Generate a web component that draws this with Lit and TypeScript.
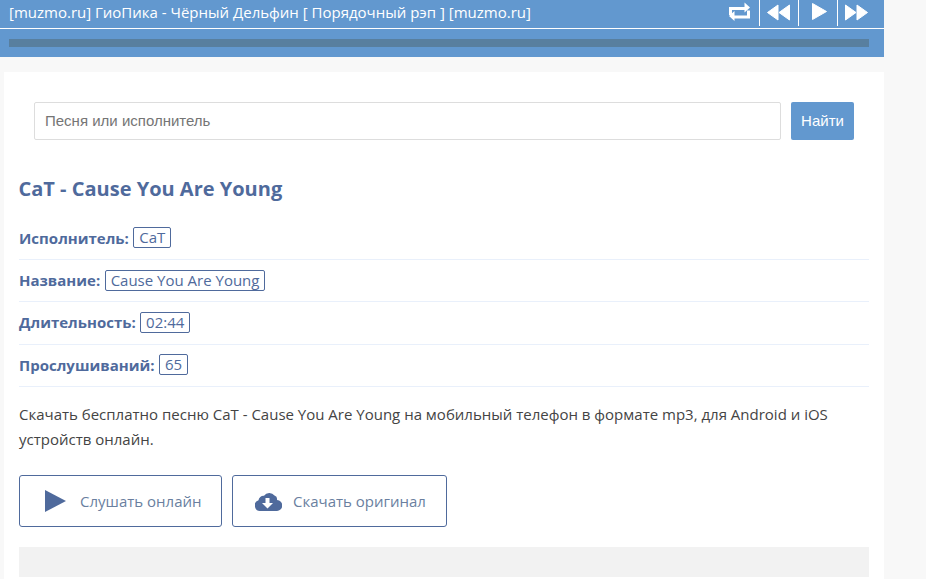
import { LitElement, html, css } from "lit";
import { customElement } from "lit/decorators.js";

const rows = [
  ["Исполнитель:", "CaT"],
  ["Название:", "Cause You Are Young"],
  ["Длительность:", "02:44"],
  ["Прослушиваний:", "65"],
];

@customElement("app-root")
export class AppRoot extends LitElement {
  static styles = css`
    :host { display: block; height: 579px; overflow: hidden; background: #f8f8f8; font-family: "Open Sans", "Noto Sans", sans-serif; color: #333; }
    .player { width: 884px; background: #6298cf; }
    .top { height: 28px; display: flex; align-items: flex-start; justify-content: space-between; border-bottom: 1px solid #fff; box-sizing: content-box; }
    .song { font-size: 15px; line-height: 24px; color: #fff; padding-left: 9px; white-space: nowrap; }
    .ctrls { display: flex; padding-right: 8px; height: 26px; }
    .ctrl { width: 38px; padding-bottom: 2px; box-sizing: content-box; height: 24px; display: flex; align-items: center; justify-content: center; border-left: 1px solid #fff; }
    .ctrl:first-child { border-left: none; }
    .ctrl svg { display: block; fill: #fff; }
    .round { stroke: #fff; stroke-width: 1; stroke-linejoin: round; }
    .bar-wrap { height: 28px; padding: 10px 15px 0 9px; box-sizing: border-box; }
    .bar { height: 8px; background: #587f9f; }
    .card { width: 880px; margin: 15px 0 0 4px; background: #fff; padding: 30px 15px 0; box-sizing: border-box; height: 520px; }
    .search { display: flex; gap: 10px; padding: 0 15px; }
    .input { flex: 1; height: 38px; box-sizing: border-box; border: 1px solid #ddd; border-radius: 2px; padding: 0 10px; font: 15px/36px "Liberation Sans", Arial, sans-serif; color: #757575; }
    .go { width: 63px; height: 38px; background: #6298cf; border-radius: 2px; color: #fff; font: 15px/38px "Liberation Sans", Arial, sans-serif; text-align: center; }
    h1 { margin: 37px 0 0 -0.5px; font-size: 20px; line-height: 24px; font-weight: 700; color: #4f6a9c; }
    .rows { margin-top: 16.4px; }
    .row { height: 42.4px; box-sizing: border-box; padding-bottom: 0.8px; border-bottom: 1px solid #e9f0fb; display: flex; align-items: center; gap: 4.4px; font-size: 15px; color: #4f6a9c; }
    .row b { font-weight: 700; }
    .tag { border: 1px solid #4f6a9c; border-radius: 2px; padding: 0 5px; line-height: 19px; }
    p { margin: 15px 0 0; font-size: 15px; line-height: 25px; color: #444; }
    .btns { display: flex; gap: 10px; margin-top: 23px; }
    .btn { height: 52px; box-sizing: border-box; border: 1px solid #4f6a9c; border-radius: 3px; display: flex; align-items: center; font-size: 15px; color: #6a7f9f; }
    .b1 { width: 203px; padding-left: 25px; gap: 14px; }
    .b2 { width: 215px; padding-left: 22px; gap: 11px; }
    .btn svg { display: block; fill: #4f6a9c; }
    .gray { margin-top: 20px; height: 30px; background: #f2f2f2; }
  `;

  render() {
    return html`
      <div class="player">
        <div class="top">
          <div class="song">[muzmo.ru] ГиоПика - Чёрный Дельфин [ Порядочный рэп ] [muzmo.ru]</div>
          <div class="ctrls">
            <div class="ctrl"><svg width="22" height="20" viewBox="0 0 22 20"><path d="M0 5h15.500V.5l5.500 5-5.500 5V8H3v5H0z"/><path d="M21 8.500v8H5.500V19L0 14l5.500-5v4.500H18v-5z"/></svg></div>
            <div class="ctrl"><svg width="24" height="20" viewBox="0 0 24 20"><path class="round" d="M11 3v15L.5 10.500zM22.500 3v15L12 10.500z"/></svg></div>
            <div class="ctrl"><svg width="18" height="20" viewBox="0 0 18 20"><path class="round" d="M3.500 1.500l14 8-14 8z"/></svg></div>
            <div class="ctrl"><svg width="24" height="20" viewBox="0 0 24 20"><path class="round" d="M.5 3L11 10.500.5 18zM12 3l10.500 7.500L12 18z"/></svg></div>
          </div>
        </div>
        <div class="bar-wrap"><div class="bar"></div></div>
      </div>
      <div class="card">
        <div class="search">
          <div class="input">Песня или исполнитель</div>
          <div class="go">Найти</div>
        </div>
        <h1>CaT - Cause You Are Young</h1>
        <div class="rows">
          ${rows.map(([k, v]) => html`<div class="row"><b>${k}</b><span class="tag">${v}</span></div>`)}
        </div>
        <p>Скачать бесплатно песню CaT - Cause You Are Young на мобильный телефон в формате mp3, для Android и iOS устройств онлайн.</p>
        <div class="btns">
          <div class="btn b1"><svg width="21" height="22" viewBox="0 0 21 22"><path d="M0 0l21 11L0 22z"/></svg>Слушать онлайн</div>
          <div class="btn b2"><svg width="27" height="20" viewBox="0 0 27 20"><path fill-rule="evenodd" d="M5.500 20A5.500 5.500 0 0 1 3.500 9.300 5 5 0 0 1 9 4.800 6.500 6.500 0 0 1 19.500 4.500 4 4 0 0 1 22 9 5.500 5.500 0 0 1 21.500 20zM10.500 7v5H7l5.500 5.500L18 12h-3.500V7z"/></svg>Скачать оригинал</div>
        </div>
        <div class="gray"></div>
      </div>
    `;
  }
}
